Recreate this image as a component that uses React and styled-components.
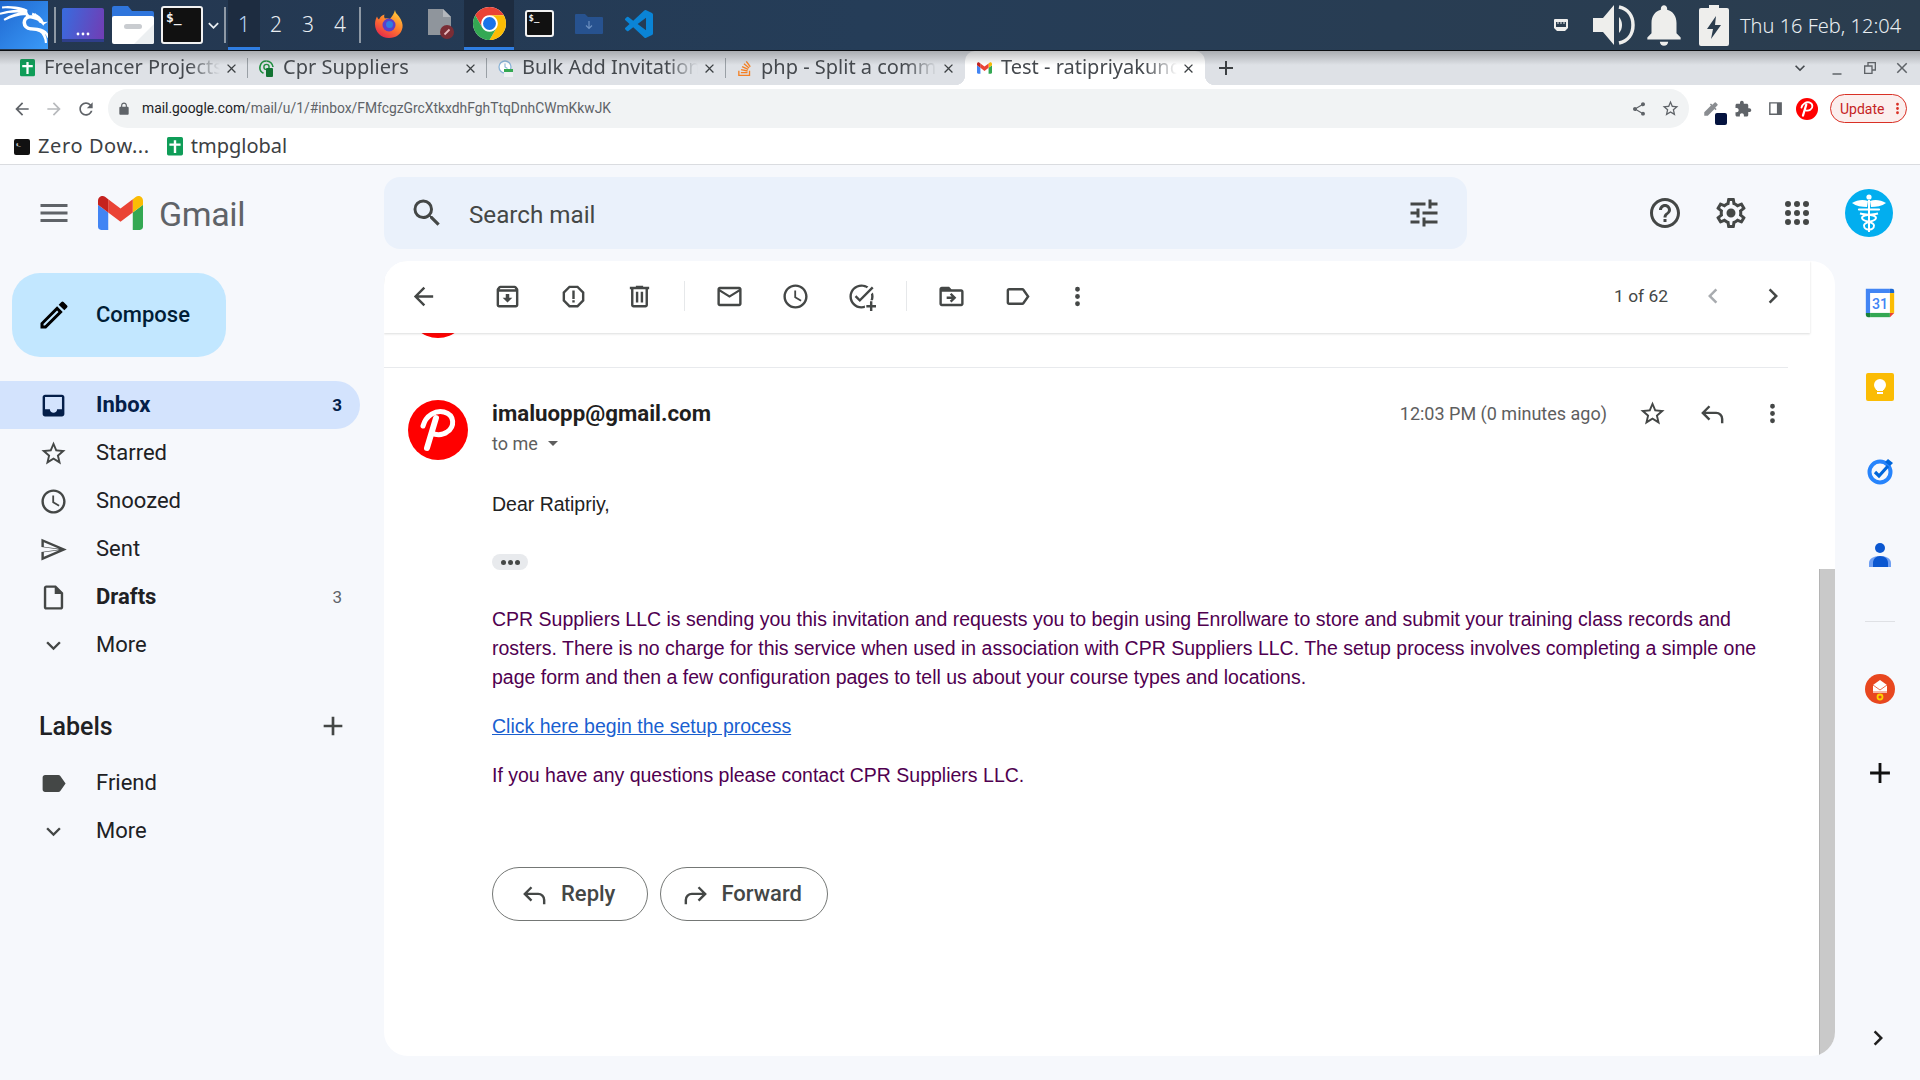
import React from 'react';
import styled, { createGlobalStyle } from 'styled-components';
import { SiKalilinux, SiStackoverflow } from 'react-icons/si';

const P = {
  menu: 'M3 18h18v-2H3v2zm0-5h18v-2H3v2zm0-7v2h18V6H3z',
  search: 'M15.5 14h-.79l-.28-.27A6.471 6.471 0 0 0 16 9.5 6.5 6.5 0 1 0 9.5 16c1.61 0 3.09-.59 4.23-1.57l.27.28v.79l5 4.99L20.49 19l-4.99-5zm-6 0C7.01 14 5 11.99 5 9.5S7.01 5 9.5 5 14 7.01 14 9.5 11.99 14 9.5 14z',
  tune: 'M3 17v2h6v-2H3zM3 5v2h10V5H3zm10 16v-2h8v-2h-8v-2h-2v6h2zM7 9v2H3v2h4v2h2V9H7zm14 4v-2H11v2h10zm-6-4h2V7h4V5h-4V3h-2v6z',
  help: 'M11 18h2v-2h-2v2zm1-16C6.48 2 2 6.48 2 12s4.48 10 10 10 10-4.48 10-10S17.52 2 12 2zm0 18c-4.41 0-8-3.59-8-8s3.59-8 8-8 8 3.59 8 8-3.59 8-8 8zm0-14c-2.21 0-4 1.79-4 4h2c0-1.1.9-2 2-2s2 .9 2 2c0 2-3 1.75-3 5h2c0-2.25 3-2.5 3-5 0-2.21-1.79-4-4-4z',
  gear: 'M19.43 12.98c.04-.32.07-.64.07-.98 0-.34-.03-.66-.07-.98l2.11-1.65c.19-.15.24-.42.12-.64l-2-3.46c-.09-.16-.26-.25-.44-.25-.06 0-.12.01-.17.03l-2.49 1c-.52-.4-1.08-.73-1.69-.98l-.38-2.65C14.46 2.18 14.25 2 14 2h-4c-.25 0-.46.18-.49.42l-.38 2.65c-.61.25-1.17.59-1.69.98l-2.49-1c-.06-.02-.12-.03-.18-.03-.17 0-.34.09-.43.25l-2 3.46c-.13.22-.07.49.12.64l2.11 1.65c-.04.32-.07.65-.07.98 0 .33.03.66.07.98l-2.11 1.65c-.19.15-.24.42-.12.64l2 3.46c.09.16.26.25.44.25.06 0 .12-.01.17-.03l2.49-1c.52.4 1.08.73 1.69.98l.38 2.65c.03.24.24.42.49.42h4c.25 0 .46-.18.49-.42l.38-2.65c.61-.25 1.17-.59 1.69-.98l2.49 1c.06.02.12.03.18.03.17 0 .34-.09.43-.25l2-3.46c.12-.22.07-.49-.12-.64l-2.11-1.65zm-1.98-1.71c.04.31.05.52.05.73 0 .21-.02.43-.05.73l-.14 1.13.89.7 1.08.84-.7 1.21-1.27-.51-1.04-.42-.9.68c-.43.32-.84.56-1.25.73l-1.06.43-.16 1.13-.2 1.35h-1.4l-.19-1.35-.16-1.13-1.06-.43c-.43-.18-.83-.41-1.23-.71l-.91-.7-1.06.43-1.27.51-.7-1.21 1.08-.84.89-.7-.14-1.13c-.03-.31-.05-.54-.05-.74s.02-.43.05-.73l.14-1.13-.89-.7-1.08-.84.7-1.21 1.27.51 1.04.42.9-.68c.43-.32.84-.56 1.25-.73l1.06-.43.16-1.13.2-1.35h1.39l.19 1.35.16 1.13 1.06.43c.43.18.83.41 1.23.71l.91.7 1.06-.43 1.27-.51.7 1.21-1.07.85-.89.7.14 1.13zM12 9a3 3 0 1 0 0 6 3 3 0 0 0 0-6z',
  apps: 'M4 6a2 2 0 1 0 4 0 2 2 0 0 0-4 0zm6 0a2 2 0 1 0 4 0 2 2 0 0 0-4 0zm6 0a2 2 0 1 0 4 0 2 2 0 0 0-4 0zM4 12a2 2 0 1 0 4 0 2 2 0 0 0-4 0zm6 0a2 2 0 1 0 4 0 2 2 0 0 0-4 0zm6 0a2 2 0 1 0 4 0 2 2 0 0 0-4 0zM4 18a2 2 0 1 0 4 0 2 2 0 0 0-4 0zm6 0a2 2 0 1 0 4 0 2 2 0 0 0-4 0zm6 0a2 2 0 1 0 4 0 2 2 0 0 0-4 0z',
  back: 'M20 11H7.83l5.59-5.59L12 4l-8 8 8 8 1.41-1.41L7.83 13H20v-2z',
  forward: 'M4 11h12.17l-5.59-5.59L12 4l8 8-8 8-1.41-1.41L16.17 13H4v-2z',
  archive: 'M20.54 5.23l-1.39-1.68C18.88 3.21 18.47 3 18 3H6c-.47 0-.88.21-1.16.55L3.46 5.23C3.17 5.57 3 6.02 3 6.5V19c0 1.1.9 2 2 2h14c1.1 0 2-.9 2-2V6.5c0-.48-.17-.93-.46-1.27zM6.24 5h11.52l.83 1H5.42l.82-1zM5 19V8h14v11H5zm8.45-9h-2.9v3H8l4 4 4-4h-2.55z',
  report: 'M15.73 3H8.27L3 8.27v7.46L8.27 21h7.46L21 15.73V8.27L15.73 3zM19 14.9L14.9 19H9.1L5 14.9V9.1L9.1 5h5.8L19 9.1v5.8zM11 7h2v7h-2zm0 8h2v2h-2z',
  trash: 'M15 4V3H9v1H4v2h1v13c0 1.1.9 2 2 2h10c1.1 0 2-.9 2-2V6h1V4h-5zm2 15H7V6h10v13zM9 8h2v9H9zm4 0h2v9h-2z',
  mail: 'M20 4H4c-1.1 0-1.99.9-1.99 2L2 18c0 1.1.9 2 2 2h16c1.1 0 2-.9 2-2V6c0-1.1-.9-2-2-2zm0 14H4V8l8 5 8-5v10zm-8-7L4 6h16l-8 5z',
  clock: 'M11.99 2C6.47 2 2 6.48 2 12s4.47 10 9.99 10C17.52 22 22 17.52 22 12S17.52 2 11.99 2zM12 20c-4.42 0-8-3.58-8-8s3.58-8 8-8 8 3.58 8 8-3.58 8-8 8zm.5-13H11v6l5.25 3.15.75-1.23-4.5-2.67z',
  addTask: 'M22 5.18L10.59 16.6l-4.24-4.24 1.41-1.41 2.83 2.83 10-10L22 5.18zm-2.21 5.04c.13.57.21 1.17.21 1.78 0 1.1-.22 2.1-.6 3h2.1c.3-.95.5-1.95.5-3 0-1.19-.22-2.33-.6-3.39l-1.61 1.61zM12 20c-4.42 0-8-3.58-8-8s3.58-8 8-8c1.58 0 3.04.46 4.28 1.25l1.44-1.44A9.9 9.9 0 0 0 12 2C6.48 2 2 6.48 2 12s4.48 10 10 10c1 0 1.9-.15 2.8-.4v-2.1c-.85.3-1.8.5-2.8.5zM19 16v3h-3v2h3v3h2v-3h3v-2h-3v-3z',
  move: 'M20 6h-8l-2-2H4c-1.1 0-2 .9-2 2v12c0 1.1.9 2 2 2h16c1.1 0 2-.9 2-2V8c0-1.1-.9-2-2-2zm0 12H4V8h16v10zm-8.01-9l-1.41 1.41L12.16 12H8v2h4.16l-1.59 1.59L11.99 17 16 13.01 11.99 9z',
  label: 'M17.63 5.84C17.27 5.33 16.67 5 16 5L5 5.01C3.9 5.01 3 5.9 3 7v10c0 1.1.9 1.99 2 1.99L16 19c.67 0 1.27-.33 1.63-.84L22 12l-4.37-6.16zM16 17H5V7h11l3.55 5L16 17z',
  labelFill: 'M17.63 5.84C17.27 5.33 16.67 5 16 5L5 5.01C3.9 5.01 3 5.9 3 7v10c0 1.1.9 1.99 2 1.99L16 19c.67 0 1.27-.33 1.63-.84L22 12l-4.37-6.16z',
  more: 'M12 8a2 2 0 1 0 0-4 2 2 0 0 0 0 4zm0 2a2 2 0 1 0 0 4 2 2 0 0 0 0-4zm0 6a2 2 0 1 0 0 4 2 2 0 0 0 0-4z',
  left: 'M15.41 7.41L14 6l-6 6 6 6 1.41-1.41L10.83 12z',
  right: 'M10 6L8.59 7.41 13.17 12l-4.58 4.59L10 18l6-6z',
  star: 'M22 9.24l-7.19-.62L12 2 9.19 8.63 2 9.24l5.46 4.73L5.82 21 12 17.27 18.18 21l-1.63-7.03L22 9.24zM12 15.4l-3.76 2.27 1-4.28-3.32-2.88 4.38-.38L12 6.1l1.71 4.04 4.38.38-3.32 2.88 1 4.28L12 15.4z',
  inbox: 'M19 3H5c-1.1 0-2 .9-2 2v14c0 1.1.9 2 2 2h14c1.1 0 2-.9 2-2V5c0-1.1-.9-2-2-2zm0 12h-4c0 1.66-1.35 3-3 3s-3-1.34-3-3H4.99V5H19v10z',
  send: 'M2.01 3L2 10l15 2-15 2 .01 7L23 12 2.01 3zM4.01 6.03l12.6 5.4-12.61-1.68.01-3.72zM4 14.25l12.6-1.68L4 17.97v-3.72z',
  draft: 'M14 2H6c-1.1 0-1.99.9-1.99 2L4 20c0 1.1.89 2 1.99 2H18c1.1 0 2-.9 2-2V8l-6-6zm4 18H6V4h7v5h5v11z',
  expand: 'M16.59 8.59L12 13.17 7.41 8.59 6 10l6 6 6-6z',
  edit: 'M3 17.25V21h3.75L17.81 9.94l-3.75-3.75L3 17.25zM5.92 19H5v-.92l9.06-9.06.92.92L5.92 19zM20.71 7.04a.996.996 0 0 0 0-1.41l-2.34-2.34a.996.996 0 0 0-1.41 0l-1.83 1.83 3.75 3.75 1.83-1.83z',
  add: 'M19 13h-6v6h-2v-6H5v-2h6V5h2v6h6v2z',
  dropdown: 'M7 10l5 5 5-5z',
  close: 'M19 6.41L17.59 5 12 10.59 6.41 5 5 6.41 10.59 12 5 17.59 6.41 19 12 13.41 17.59 19 19 17.59 13.41 12z',
  refresh: 'M17.65 6.35C16.2 4.9 14.21 4 12 4c-4.42 0-7.99 3.58-7.99 8s3.57 8 7.99 8c3.73 0 6.84-2.55 7.73-6h-2.08c-.82 2.33-3.04 4-5.65 4-3.31 0-6-2.69-6-6s2.69-6 6-6c1.66 0 3.14.69 4.22 1.78L13 11h7V4l-2.35 2.35z',
  lock: 'M18 8h-1V6c0-2.76-2.24-5-5-5S7 3.24 7 6v2H6c-1.1 0-2 .9-2 2v10c0 1.1.9 2 2 2h12c1.1 0 2-.9 2-2V10c0-1.1-.9-2-2-2zM9 6c0-1.66 1.34-3 3-3s3 1.34 3 3v2H9V6z',
  share: 'M18 16.08c-.76 0-1.44.3-1.96.77L8.91 12.7c.05-.23.09-.46.09-.7s-.04-.47-.09-.7l7.05-4.11c.54.5 1.25.81 2.04.81 1.66 0 3-1.34 3-3s-1.34-3-3-3-3 1.34-3 3c0 .24.04.47.09.7L8.04 9.81C7.5 9.31 6.79 9 6 9c-1.66 0-3 1.34-3 3s1.34 3 3 3c.79 0 1.5-.31 2.04-.81l7.12 4.16c-.05.21-.08.43-.08.65 0 1.61 1.31 2.92 2.92 2.92 1.61 0 2.92-1.31 2.92-2.92s-1.31-2.92-2.92-2.92z',
  puzzle: 'M20.5 11H19V7c0-1.1-.9-2-2-2h-4V3.5C13 2.12 11.88 1 10.5 1S8 2.12 8 3.5V5H4c-1.1 0-1.99.9-1.99 2v3.8H3.5c1.49 0 2.7 1.21 2.7 2.7s-1.21 2.7-2.7 2.7H2V20c0 1.1.9 2 2 2h3.8v-1.5c0-1.49 1.21-2.7 2.7-2.7 1.49 0 2.7 1.21 2.7 2.7V22H17c1.1 0 2-.9 2-2v-4h1.5c1.38 0 2.5-1.12 2.5-2.5S21.88 11 20.5 11z',
  dropper: 'M20.71 5.63l-2.34-2.34a.996.996 0 0 0-1.41 0l-3.12 3.12-1.93-1.91-1.41 1.41 1.42 1.42L3 16.25V21h4.75l8.92-8.92 1.42 1.42 1.41-1.41-1.92-1.92 3.12-3.12c.4-.4.4-1.03.01-1.42z',
  sidePanel: 'M3 3h18v18H3V3zm2 2v14h9V5H5z',
  bell: 'M12 22c1.1 0 2-.9 2-2h-4c0 1.1.9 2 2 2zm6-6v-5c0-3.07-1.63-5.64-4.5-6.32V4c0-.83-.67-1.5-1.5-1.5s-1.5.67-1.5 1.5v.68C7.64 5.36 6 7.92 6 11v5l-2 2v1h16v-1l-2-2z',
};

const Icon = styled.svg.attrs({ viewBox: '0 0 24 24' })`
  width: ${(p) => p.$size || 29}px;
  height: ${(p) => p.$size || 29}px;
  flex: none;
  fill: ${(p) => p.$color || '#444746'};
  fill-rule: evenodd;
`;

const Glyph = ({ d, size, color }) => (
  <Icon $size={size} $color={color}>
    <path d={d} />
  </Icon>
);

const ArrowIcon = styled.svg.attrs({ viewBox: '0 0 24 24' })`
  width: 29px;
  height: 29px;
  flex: none;
  fill: none;
  stroke: ${(p) => p.$color || '#444746'};
  stroke-width: 2;
  transform: ${(p) => (p.$flip ? 'scaleX(-1)' : 'none')};
`;

const ReplyArrow = ({ flip }) => (
  <ArrowIcon $flip={flip}>
    <path d="M9.5 6L4 11.5 9.5 17M4 11.5h11a5 5 0 0 1 5 5V20" />
  </ArrowIcon>
);

const GlobalStyle = createGlobalStyle`
  html, body {
    margin: 0;
    height: 1080px;
    overflow: hidden;
    background: #f6f8fc;
    font-family: Roboto, "Liberation Sans", sans-serif;
  }
  * { box-sizing: border-box; }
`;

const Desktop = styled.div`
  width: 1920px;
  height: 1080px;
  display: flex;
  flex-direction: column;
  overflow: hidden;
`;

/* ---------- panel of the desktop ---------- */
const Taskbar = styled.div`
  height: 51px;
  flex: none;
  display: flex;
  align-items: center;
  background: linear-gradient(90deg, #243750 0%, #253d58 45%, #2b3d4e 100%);
  border-bottom: 1px solid #0c0f12;
  font-family: "Noto Sans", sans-serif;
  color: #e9eef2;
`;

const KaliTile = styled.div`
  width: 48px;
  height: 48px;
  margin-bottom: 1px;
  display: flex;
  align-items: center;
  justify-content: center;
  background: linear-gradient(135deg, #2068d0, #3a9af8);
`;

const PanelSep = styled.div`
  width: 2px;
  height: 36px;
  margin-left: ${(p) => p.$left || 0}px;
  background: #8e99a5;
  flex: none;
`;

const Launcher = styled.div`
  display: flex;
  margin-left: ${(p) => p.$left || 0}px;
  flex: none;
`;

const Workspace = styled.div`
  width: 32px;
  height: 50px;
  display: flex;
  align-items: center;
  justify-content: center;
  font-size: 21px;
  font-weight: 300;
  background: ${(p) => (p.$active ? '#1d2c40' : 'transparent')};
  border-bottom: 3px solid ${(p) => (p.$active ? '#2f7de1' : 'transparent')};
  color: ${(p) => (p.$active ? '#bcd6f4' : '#e9eef2')};
  margin-left: ${(p) => (p.$active ? '2px' : '0')};
`;

const AppButton = styled.div`
  width: 50px;
  height: 50px;
  display: flex;
  align-items: center;
  justify-content: center;
  flex: none;
  background: ${(p) => (p.$active ? '#1d2c40' : 'transparent')};
  border-bottom: 3px solid ${(p) => (p.$active ? '#2f7de1' : 'transparent')};
`;

const Tray = styled.div`
  margin-left: auto;
  display: flex;
  align-items: center;
  height: 50px;
`;

const Clock = styled.div`
  margin-left: 11px;
  font-size: 20px;
  font-weight: 300;
  width: 180px;
  white-space: nowrap;
`;

const SvgBox = styled.svg`
  display: block;
  flex: none;
  margin-left: ${(p) => p.$left || 0}px;
`;

/* ---------- browser chrome ---------- */
const TabStrip = styled.div`
  height: 34px;
  flex: none;
  position: relative;
  display: flex;
  align-items: center;
  padding-left: 9px;
  background: #dee1e6;
  font-family: "Noto Sans", sans-serif;
  color: #45494e;
  &::after {
    content: '';
    position: absolute;
    left: 0;
    right: 0;
    top: 0;
    height: 14px;
    background: linear-gradient(rgba(60, 64, 67, 0.32), rgba(60, 64, 67, 0));
    pointer-events: none;
  }
`;

const Tab = styled.div`
  width: 239px;
  height: 34px;
  flex: none;
  display: flex;
  align-items: center;
  padding-left: 11px;
  position: relative;
  ${(p) => p.$active && `
    background: #fff;
    border-radius: 10px 10px 0 0;
    width: 240px;
    padding-left: 12px;
    &::before, &::after {
      content: '';
      position: absolute;
      bottom: 0;
      width: 10px;
      height: 10px;
    }
    &::before {
      left: -10px;
      background: radial-gradient(circle at 0 0, transparent 10px, #fff 10.5px);
    }
    &::after {
      right: -10px;
      background: radial-gradient(circle at 100% 0, transparent 10px, #fff 10.5px);
    }
  `}
`;

const TabTitle = styled.div`
  margin-left: 9px;
  width: 176px;
  padding-bottom: 3px;
  font-size: 20px;
  white-space: nowrap;
  overflow: hidden;
  -webkit-mask-image: linear-gradient(90deg, #000 82%, transparent 100%);
  mask-image: linear-gradient(90deg, #000 82%, transparent 100%);
`;

const TabClose = styled.div`
  width: 22px;
  display: flex;
  justify-content: center;
`;

const TabDivider = styled.div`
  width: 1px;
  height: 20px;
  margin-left: auto;
  background: #9aa0a6;
`;

const NewTab = styled.div`
  margin-left: 9px;
  display: flex;
`;

const WindowControls = styled.div`
  margin-left: auto;
  display: flex;
  align-items: center;
  gap: 14px;
  padding-right: 9px;
`;

const WinBtn = styled.div`
  width: ${(p) => p.$w || 18}px;
  margin-right: ${(p) => p.$right || 0}px;
  display: flex;
  justify-content: center;
`;

const UrlRow = styled.div`
  height: 44px;
  flex: none;
  background: #fff;
  display: flex;
  align-items: center;
  padding: 4px 0 1px 6px;
`;

const NavBtn = styled.div`
  width: 32px;
  display: flex;
  justify-content: center;
  flex: none;
`;

const Omnibox = styled.div`
  width: 1581px;
  height: 39px;
  margin-left: 6px;
  border-radius: 20px;
  background: #f1f3f4;
  display: flex;
  align-items: center;
  padding-left: 9px;
  flex: none;
`;

const UrlText = styled.div`
  margin-left: 11px;
  padding-bottom: 1px;
  font-size: 13.85px;
  color: #5f6368;
  white-space: nowrap;
  b { font-weight: 400; color: #202124; }
`;

const OmniActions = styled.div`
  margin-left: auto;
  display: flex;
  align-items: center;
  gap: 14px;
  padding-right: 9px;
`;

const Extensions = styled.div`
  display: flex;
  align-items: center;
  margin-left: 10px;
  gap: 8px;
`;

const ExtSlot = styled.div`
  width: 24px;
  height: 24px;
  position: relative;
  display: flex;
  align-items: center;
  justify-content: center;
`;

const DropperBadge = styled.span`
  position: absolute;
  right: -4px;
  bottom: -4px;
  width: 12px;
  height: 12px;
  border-radius: 2px;
  background: #04133f;
`;

const UpdatePill = styled.div`
  width: 77px;
  height: 29px;
  margin-left: 3px;
  border: 1px solid #d93025;
  border-radius: 15px;
  background: #fbeeed;
  color: #c5221f;
  font-size: 14px;
  display: flex;
  align-items: center;
  padding-left: 9px;
  svg { margin-left: auto; }
`;

const BookmarkBar = styled.div`
  height: 36px;
  flex: none;
  background: #fff;
  border-bottom: 1px solid #dadce0;
  display: flex;
  align-items: center;
  padding-left: 14px;
  font-family: "Noto Sans", sans-serif;
  font-size: 20px;
  color: #3c4043;
`;

const Bookmark = styled.div`
  display: flex;
  align-items: center;
  gap: 8px;
  margin-right: 17px;
  white-space: nowrap;
`;

const BookmarkName = styled.span`
  padding-bottom: 3px;
  letter-spacing: ${(p) => (p.$wide ? '0.6px' : '0')};
`;

/* ---------- gmail ---------- */
const Mail = styled.div`
  flex: 1;
  min-height: 0;
  display: flex;
  flex-direction: column;
  background: #f6f8fc;
`;

const TopBar = styled.div`
  height: 96px;
  flex: none;
  display: flex;
`;

const Brand = styled.div`
  width: 384px;
  flex: none;
  display: flex;
  align-items: center;
  padding-left: 36px;
`;

const BrandName = styled.div`
  margin-left: 16px;
  padding-top: 2px;
  font-size: 34px;
  color: #5f6368;
  letter-spacing: -0.4px;
`;

const SearchBox = styled.div`
  width: 1083px;
  height: 72px;
  margin-top: 12px;
  border-radius: 16px;
  background: #eaf1fb;
  display: flex;
  align-items: center;
  padding: 0 25px;
  font-size: 24.2px;
  color: #444746;
`;

const SearchHint = styled.div`
  margin-left: 24px;
  padding-top: 3px;
  flex: 1;
`;

const TopActions = styled.div`
  margin-left: auto;
  display: flex;
  align-items: center;
  padding-right: 27px;
`;

const TopAction = styled.div`
  width: 66px;
  display: flex;
  justify-content: center;
`;

const UserAvatar = styled.div`
  width: 48px;
  height: 48px;
  margin-left: 15px;
  border-radius: 50%;
  background: #02aeef;
  display: flex;
  align-items: center;
  justify-content: center;
`;

const Body = styled.div`
  flex: 1;
  min-height: 0;
  display: flex;
`;

const Sidebar = styled.div`
  width: 384px;
  flex: none;
`;

const Compose = styled.div`
  width: 214px;
  height: 84px;
  margin: 12px 0 24px 12px;
  border-radius: 28px;
  background: #c2e7ff;
  display: flex;
  align-items: center;
  gap: 24px;
  padding-left: 24px;
  font-size: 22px;
  font-weight: 500;
  color: #001d35;
`;

const NavRow = styled.div`
  width: 360px;
  height: 48px;
  display: flex;
  align-items: center;
  gap: 28px;
  padding: 0 18px 0 39px;
  border-radius: 0 24px 24px 0;
  font-size: 22px;
  font-weight: ${(p) => (p.$bold ? 700 : 400)};
  color: ${(p) => (p.$active ? '#041e49' : '#202124')};
  background: ${(p) => (p.$active ? '#d3e3fd' : 'transparent')};
`;

const RowText = styled.span`
  padding-bottom: 2px;
`;

const NavCount = styled.span`
  margin-left: auto;
  font-size: 17px;
  font-weight: ${(p) => (p.$strong ? 700 : 400)};
  color: ${(p) => (p.$strong ? '#041e49' : '#5f6368')};
`;

const LabelsHead = styled.div`
  height: 48px;
  margin-top: 33px;
  margin-bottom: 9px;
  width: 360px;
  display: flex;
  align-items: center;
  justify-content: space-between;
  padding: 0 11px 0 39px;
  font-size: 25px;
  font-weight: 500;
  color: #202124;
`;

const Panel = styled.div`
  width: 1451px;
  height: 795px;
  flex: none;
  border-radius: 24px;
  background: #fff;
  overflow: hidden;
  display: flex;
  flex-direction: column;
`;

const MailToolbar = styled.div`
  height: 72px;
  width: 1426px;
  flex: none;
  display: flex;
  align-items: center;
  padding: 0 7px 2px 6px;
  box-shadow: 0 1px 2px rgba(60, 64, 67, 0.18);
  background: #fff;
  position: relative;
  z-index: 1;
`;

const ToolBtn = styled.div`
  width: ${(p) => p.$w || 66}px;
  height: 48px;
  flex: none;
  margin-left: ${(p) => p.$left || 0}px;
  display: flex;
  align-items: center;
  justify-content: center;
`;

const ToolSep = styled.div`
  width: 1px;
  height: 30px;
  flex: none;
  margin: 0 11px 0 12px;
  background: #e6e8ea;
`;

const PageCount = styled.div`
  margin-left: auto;
  margin-right: 15px;
  font-size: 17.4px;
  color: #444746;
`;

const MessageArea = styled.div`
  flex: 1;
  min-height: 0;
  display: flex;
`;

const MessageScroll = styled.div`
  flex: 1;
  min-width: 0;
`;

const PeekAvatar = styled.div`
  width: 60px;
  height: 5px;
  margin-left: 24px;
  overflow: hidden;
  &::before {
    content: '';
    display: block;
    width: 60px;
    height: 60px;
    margin-top: -55px;
    border-radius: 50%;
    background: #f00;
  }
`;

const MessageRule = styled.div`
  width: 1404px;
  height: 1px;
  margin-top: 29px;
  background: #e8eaed;
`;

const MessageHead = styled.div`
  display: flex;
  margin-top: 32px;
  padding: 0 17px 0 24px;
  height: 60px;
`;

const SenderAvatar = styled.div`
  width: 60px;
  height: 60px;
  flex: none;
  margin-right: 24px;
`;

const SenderInfo = styled.div`
  flex: 1;
`;

const SenderName = styled.div`
  font-size: 22.3px;
  line-height: 26px;
  font-weight: 700;
  color: #1f1f1f;
`;

const Recipient = styled.div`
  margin-top: 5px;
  height: 24px;
  display: flex;
  align-items: center;
  font-size: 18px;
  color: #5e5e5e;
  svg { margin-left: 3px; }
`;

const MessageMeta = styled.div`
  display: flex;
  align-items: center;
  height: 27px;
  font-size: 18px;
  color: #5e5e5e;
`;

const MetaTime = styled.div`
  margin-right: 15px;
`;

const MetaBtn = styled.div`
  width: 60px;
  display: flex;
  justify-content: center;
`;

const MessageBody = styled.div`
  padding-left: 108px;
  width: 1392px;
  margin-top: 30px;
  font-family: "Liberation Sans", Arial, sans-serif;
  font-size: 19.5px;
  line-height: 29px;
  color: #222;
`;

const TrimPill = styled.div`
  width: 36px;
  height: 16px;
  margin-top: 35px;
  border-radius: 8px;
  background: #e8eaed;
  display: flex;
  align-items: center;
  justify-content: center;
  gap: 2px;
  span {
    width: 5px;
    height: 5px;
    border-radius: 50%;
    background: #444746;
  }
`;

const Para = styled.p`
  margin: ${(p) => p.$top || 20}px 0 0;
  color: #500050;
`;

const MailLink = styled.a`
  color: #1a5fd0;
  text-decoration: underline;
`;

const ActionRow = styled.div`
  display: flex;
  gap: 12px;
  margin-top: 77px;
  font-family: Roboto, sans-serif;
`;

const PillButton = styled.div`
  height: 54px;
  border: 1px solid #747775;
  border-radius: 27px;
  display: flex;
  align-items: center;
  gap: ${(p) => (p.$forward ? 11 : 12)}px;
  padding: ${(p) => (p.$forward ? '0 25px 0 20px' : '0 32px 0 27px')};
  font-size: 22px;
  font-weight: 500;
  color: #444746;
`;

const ScrollTrack = styled.div`
  width: 16px;
  flex: none;
  display: flex;
  align-items: flex-end;
`;

const ScrollThumb = styled.div`
  width: 100%;
  height: 487px;
  background: #c9c9c9;
  border-left: 1px solid #b4b4b4;
`;

const Rail = styled.div`
  flex: 1;
  display: flex;
  flex-direction: column;
  align-items: center;
  padding: 0 0 27px 5px;
`;

const RailCell = styled.div`
  height: 84px;
  width: 100%;
  flex: none;
  display: flex;
  align-items: center;
  justify-content: center;
`;

const RailRule = styled.div`
  width: 30px;
  height: 1px;
  flex: none;
  margin: 24px 0 25px;
  background: #dfe1e5;
`;

const RailToggle = styled.div`
  margin-top: auto;
  margin-right: 5px;
  display: flex;
`;

/* ---------- drawn logos ---------- */
const SheetsIcon = ({ size = 15 }) => (
  <SvgBox width={size} height={size * 1.15} viewBox="0 0 20 23">
    <rect width="20" height="23" rx="2" fill="#0f9d58" />
    <path d="M3 8h5.500V4h3v4H17v3h-5.500v9h-3v-9H3z" fill="#fff" />
  </SvgBox>
);

const CprIcon = () => (
  <SvgBox width="15" height="17" viewBox="0 0 15 17">
    <path d="M7.500 1a6.500 6.500 0 0 0-3 12.300" fill="none" stroke="#1e8e3e" strokeWidth="1.600" />
    <path d="M7.500 1a6.500 6.500 0 0 1 6.500 6" fill="none" stroke="#1e8e3e" strokeWidth="1.600" />
    <circle cx="7.500" cy="7" r="2.600" fill="none" stroke="#1e8e3e" strokeWidth="1.400" />
    <rect x="7" y="8" width="7" height="9" rx="1" fill="#137333" />
  </SvgBox>
);

const BulkIcon = () => (
  <SvgBox width="15" height="17" viewBox="0 0 15 17">
    <circle cx="7" cy="7" r="6" fill="#fff" stroke="#8ab4d8" strokeWidth="1.300" />
    <path d="M7 3.500V7l2.500 1.500" fill="none" stroke="#8ab4d8" strokeWidth="1.100" />
    <rect x="6" y="9" width="9" height="3" fill="#34a853" />
    <rect x="6" y="12" width="9" height="5" fill="#eceff1" />
  </SvgBox>
);

const GmailMark = ({ w = 45, h = 34 }) => (
  <SvgBox width={w} height={h} viewBox="52 42 88 66">
    <path fill="#4285f4" d="M58 108h14V74L52 59v43c0 3.32 2.69 6 6 6" />
    <path fill="#34a853" d="M120 108h14c3.32 0 6-2.69 6-6V59l-20 15" />
    <path fill="#fbbc04" d="M120 48v26l20-15v-8c0-7.42-8.47-11.65-14.4-7.2" />
    <path fill="#ea4335" d="M72 74V48l24 18 24-18v26L96 92" />
    <path fill="#c5221f" d="M52 51v8l20 15V48l-5.6-4.2c-5.94-4.45-14.4-.22-14.4 7.2" />
  </SvgBox>
);

const PinLogo = ({ size }) => (
  <SvgBox width={size} height={size} viewBox="0 0 60 60">
    <circle cx="30" cy="30" r="30" fill="#f00" />
    <path d="M19 48C22 38 25 28 28 18" fill="none" stroke="#fff" strokeWidth="6" strokeLinecap="round" />
    <path d="M15 26C18 15 28 10 36 12C47 15 47 27 39 32C35 35 30 35 26 34" fill="none" stroke="#fff" strokeWidth="5" strokeLinecap="round" />
  </SvgBox>
);

const CaduceusLogo = () => (
  <SvgBox width="48" height="48" viewBox="0 0 48 48">
    <circle cx="24" cy="8" r="2.600" fill="#fff" />
    <path d="M23 12C18 10 12 11 7 14C11 17 17 18 22 18z" fill="#fff" />
    <path d="M25 12C30 10 36 11 41 14C37 17 31 18 26 18z" fill="#fff" />
    <path d="M24 11V43" stroke="#fff" strokeWidth="2" />
    <path d="M14 20.500H34" stroke="#fff" strokeWidth="2.200" strokeLinecap="round" />
    <path d="M15 24.500C20 26 31 25 31 29C31 33 19 32 19 36.500C19 40 22 40.500 23 40.500" fill="none" stroke="#fff" strokeWidth="1.900" />
    <path d="M33 24.500C28 26 17 25 17 29C17 33 29 32 29 36.500C29 40 26 40.500 25 40.500" fill="none" stroke="#fff" strokeWidth="1.900" />
  </SvgBox>
);

const ChromeLogo = () => (
  <SvgBox width="33" height="33" viewBox="2 2 44 44">
    <circle cx="24" cy="24" r="22" fill="#fff" />
    <path fill="#ea4335" d="M4.95 13A22 22 0 0 1 43.05 13H24A11 11 0 0 0 14.47 29.5Z" />
    <path fill="#fbbc04" d="M43.05 13A22 22 0 0 1 24 46L33.53 29.5A11 11 0 0 0 24 13Z" />
    <path fill="#34a853" d="M24 46A22 22 0 0 1 4.95 13L14.47 29.5A11 11 0 0 0 33.53 29.5Z" />
    <circle cx="24" cy="24" r="8.6" fill="#1a73e8" />
  </SvgBox>
);

const FirefoxLogo = () => (
  <SvgBox width="28" height="28" viewBox="0 0 28 28">
    <defs>
      <linearGradient id="ffx" x1="0.8" y1="0" x2="0.2" y2="1">
        <stop offset="0" stopColor="#ffd23c" />
        <stop offset="0.5" stopColor="#ff7a2c" />
        <stop offset="1" stopColor="#e5224e" />
      </linearGradient>
    </defs>
    <path fill="url(#ffx)" d="M20 0c.4 3 2 4 4 6.500 3 4 4 8 3.500 11C26.500 24 21 28 14 28 6 28 0 22 0 14c0-3 1-6 2-7.500C2.500 8 3.300 9 4 9.500 5 7 7 5 9.500 4.500 9 6 9 7.500 10 8.500c2-.5 3.500 0 5 .5 2-3 4-5 5-9z" />
    <circle cx="14" cy="15" r="6.500" fill="#5b3fc9" />
    <circle cx="14.500" cy="14.500" r="3.500" fill="#2f7de1" />
  </SvgBox>
);

const DocLogo = () => (
  <SvgBox width="28" height="30" viewBox="0 0 28 30" $left={4}>
    <path fill="#8f959c" d="M1 0h15l8 8v18H1z" />
    <path fill="#b3b7bc" d="M16 0l8 8h-8z" />
    <circle cx="20" cy="23" r="7" fill="#7a2d35" />
    <path d="M17.500 25.500l5-5" stroke="#e8b9bd" strokeWidth="1.800" />
  </SvgBox>
);

const TerminalLogo = ({ w, h, size, border = 2 }) => (
  <SvgBox width={w} height={h} viewBox={`0 0 ${w} ${h}`}>
    <rect x={border / 2} y={border / 2} width={w - border} height={h - border} rx="2" fill="#111" stroke="#f2f2f2" strokeWidth={border} />
    <text x={w * 0.12} y={h * 0.42} fontFamily="DejaVu Sans Mono, monospace" fontSize={size} fontWeight="700" fill="#f2f2f2">$_</text>
  </SvgBox>
);

const WindowTile = () => (
  <SvgBox width="42" height="35" viewBox="0 0 42 35">
    <defs>
      <linearGradient id="wt" x1="0" y1="0.4" x2="1" y2="0.6">
        <stop offset="0" stopColor="#3b69dc" />
        <stop offset="1" stopColor="#6f3fb6" />
      </linearGradient>
    </defs>
    <rect width="42" height="34" rx="2" fill="url(#wt)" />
    <rect y="31" width="42" height="3" fill="#2e3e8a" />
    <circle cx="16" cy="26" r="1.400" fill="#fff" />
    <circle cx="21" cy="26" r="1.400" fill="#fff" />
    <circle cx="26" cy="26" r="1.400" fill="#fff" />
  </SvgBox>
);

const FolderLogo = () => (
  <SvgBox width="42" height="38" viewBox="0 0 42 38" $left={8}>
    <path fill="#2f75dc" d="M2 0h14l4 5h20a2 2 0 0 1 2 2v8H0V2a2 2 0 0 1 2-2z" />
    <path fill="#fff" d="M2 10h38a2 2 0 0 1 2 2v24a2 2 0 0 1-2 2H2a2 2 0 0 1-2-2V12a2 2 0 0 1 2-2z" />
    <path fill="#eceff1" d="M42 18v18a2 2 0 0 1-2 2H22z" />
    <rect x="12" y="18" width="18" height="5" rx="2.500" fill="#c9ccd0" />
  </SvgBox>
);

const DownloadFolder = () => (
  <SvgBox width="28" height="20" viewBox="0 0 28 20">
    <path fill="#27528f" d="M1 0h9l3 3h14a1 1 0 0 1 1 1v15a1 1 0 0 1-1 1H1a1 1 0 0 1-1-1V1a1 1 0 0 1 1-1z" />
    <path d="M14 7v7M11 11.500l3 3 3-3" stroke="#6b8fc0" strokeWidth="1.200" fill="none" />
  </SvgBox>
);

const VsCodeLogo = () => (
  <SvgBox width="28" height="28" viewBox="0 0 24 24">
    <path fill="#0a84d6" d="M23.150 2.587L18.210.21a1.494 1.494 0 0 0-1.705.29l-9.460 8.630-4.120-3.128a.999.999 0 0 0-1.276.057L.327 7.261A1 1 0 0 0 .326 8.740L3.899 12 .326 15.260a1 1 0 0 0 .001 1.479L1.650 17.940a.999.999 0 0 0 1.276.057l4.120-3.128 9.460 8.630a1.492 1.492 0 0 0 1.704.29l4.942-2.377A1.500 1.500 0 0 0 24 20.060V3.939a1.500 1.500 0 0 0-.850-1.352zm-5.146 14.861L10.826 12l7.178-5.448v10.896z" />
  </SvgBox>
);

const NetworkIcon = () => (
  <SvgBox width="14" height="13" viewBox="0 0 14 13">
    <path fill="#eeeeec" d="M1 0h12a1 1 0 0 1 1 1v8l-3 3H3L0 9V1a1 1 0 0 1 1-1z" />
    <rect x="2" y="3" width="10" height="5" fill="#2b3d4e" />
    <path stroke="#eeeeec" strokeWidth="1" d="M4 3v2M7 3v2M10 3v2" />
  </SvgBox>
);

const VolumeIcon = () => (
  <SvgBox width="42" height="40" viewBox="0 0 42 40" $left={25}>
    <path fill="#eeeeec" d="M0 13h10L21 0v40L10 27H0z" />
    <path d="M26 2c9 2 14 9 14 18s-5 16-14 18" fill="none" stroke="#eeeeec" strokeWidth="3.500" />
    <path d="M26 12c2 2 3 5 3 8s-1 6-3 8z" fill="#eeeeec" />
  </SvgBox>
);

const BatteryIcon = () => (
  <SvgBox width="30" height="41" viewBox="0 0 30 41" $left={10}>
    <path fill="#eeeeec" d="M10 0h10v3h8a2 2 0 0 1 2 2v34a2 2 0 0 1-2 2H2a2 2 0 0 1-2-2V5a2 2 0 0 1 2-2h8z" />
    <path fill="#2b3d4e" d="M17 11L8 24h6l-2 10 10-14h-6z" />
  </SvgBox>
);

const CalendarIcon = () => (
  <SvgBox width="34" height="34" viewBox="0 0 24 24">
    <rect x="5" y="5" width="14" height="14" fill="#fff" />
    <path fill="#4285f4" d="M2 2h17v3H5v14H2z" />
    <path fill="#1967d2" d="M19 2h1.500A1.500 1.500 0 0 1 22 3.500V5h-3z" />
    <path fill="#fbbc04" d="M19 5h3v14h-3z" />
    <path fill="#34a853" d="M5 19h14v3H5z" />
    <path fill="#188038" d="M2 19h3v3H3.500A1.500 1.500 0 0 1 2 20.500z" />
    <path fill="#ea4335" d="M19 19h3l-3 3z" />
    <text x="12" y="16.300" textAnchor="middle" fontFamily="Roboto, sans-serif" fontSize="10" fontWeight="500" fill="#4285f4">31</text>
  </SvgBox>
);

const KeepIcon = () => (
  <SvgBox width="28" height="28" viewBox="0 0 28 28">
    <rect width="28" height="28" rx="2" fill="#fbbc04" />
    <circle cx="14" cy="12" r="6" fill="#fff" />
    <rect x="11" y="16" width="6" height="2" fill="#fff" />
    <rect x="11" y="19" width="6" height="2" fill="#fff" />
  </SvgBox>
);

const TasksIcon = () => (
  <SvgBox width="27" height="27" viewBox="0 0 27 27">
    <circle cx="13" cy="14" r="10.500" fill="none" stroke="#2684fc" strokeWidth="4" />
    <path d="M8 14l4 4 9-10" fill="none" stroke="#0066da" strokeWidth="3.200" />
    <path d="M21 1l5 4-3 3-5-4z" fill="#0066da" />
  </SvgBox>
);

const ContactsIcon = () => (
  <SvgBox width="22" height="24" viewBox="0 0 22 24">
    <circle cx="11" cy="5" r="5" fill="#0b57d0" />
    <path d="M0 24v-4c0-4 4-7 11-7s11 3 11 7v4z" fill="#6f9ff2" />
    <path d="M4 24v-4c0-4 3-7 7-7 5 0 8 3 8 7v4z" fill="#0b57d0" />
  </SvgBox>
);

const AddonIcon = () => (
  <SvgBox width="30" height="30" viewBox="0 0 30 30">
    <circle cx="15" cy="15" r="15" fill="#e8471f" />
    <path d="M8 11l7-5 7 5v8H8z" fill="#fff" />
    <path d="M8 11l7 5 7-5" fill="none" stroke="#e8471f" strokeWidth="0.800" />
    <rect x="8" y="17" width="14" height="2" fill="#f7b7a6" />
    <circle cx="15" cy="23" r="2.500" fill="none" stroke="#fdd000" strokeWidth="1.800" />
  </SvgBox>
);

const tabs = [
  { title: 'Freelancer Projects', icon: <SheetsIcon /> },
  { title: 'Cpr Suppliers', icon: <CprIcon /> },
  { title: 'Bulk Add Invitations', icon: <BulkIcon /> },
  { title: 'php - Split a comma', icon: <SiStackoverflow size={15} color="#f48024" />, plain: true },
];

const folders = [
  { name: 'Inbox', icon: P.inbox, bold: true, active: true, count: '3' },
  { name: 'Starred', icon: P.star },
  { name: 'Snoozed', icon: P.clock },
  { name: 'Sent', icon: P.send },
  { name: 'Drafts', icon: P.draft, bold: true, count: '3' },
  { name: 'More', icon: P.expand },
];

export default function App() {
  return (
    <Desktop>
      <GlobalStyle />
      <Taskbar>
        <KaliTile><SiKalilinux size={48} color="#fff" stroke="#fff" strokeWidth={1} /></KaliTile>
        <PanelSep $left={6} />
        <Launcher $left={6}><WindowTile /></Launcher>
        <FolderLogo />
        <Launcher $left={7}><TerminalLogo w={42} h={38} size={13} /></Launcher>
        <Launcher><Glyph d={P.expand} size={21} color="#e9eef2" /></Launcher>
        <PanelSep />
        {[1, 2, 3, 4].map((n) => (
          <Workspace key={n} $active={n === 1}>{n}</Workspace>
        ))}
        <PanelSep $left={3} />
        <Launcher $left={3}><AppButton><FirefoxLogo /></AppButton></Launcher>
        <AppButton><DocLogo /></AppButton>
        <AppButton $active><ChromeLogo /></AppButton>
        <AppButton><TerminalLogo w={29} h={27} size={9} /></AppButton>
        <AppButton><DownloadFolder /></AppButton>
        <AppButton><VsCodeLogo /></AppButton>
        <Tray>
          <NetworkIcon />
          <VolumeIcon />
          <Launcher $left={4}><Glyph d={P.bell} size={50} color="#eeeeec" /></Launcher>
          <BatteryIcon />
          <Clock>Thu 16 Feb, 12:04</Clock>
        </Tray>
      </Taskbar>

      <TabStrip>
        {tabs.map((t) => (
          <Tab key={t.title}>
            {t.icon}
            <TabTitle>{t.title}</TabTitle>
            <TabClose><Glyph d={P.close} size={15} color="#3c4043" /></TabClose>
            {!t.plain && <TabDivider />}
          </Tab>
        ))}
        <Tab $active>
          <GmailMark w={15} h={12} />
          <TabTitle>Test - ratipriyakunde</TabTitle>
          <TabClose><Glyph d={P.close} size={15} color="#3c4043" /></TabClose>
        </Tab>
        <NewTab><Glyph d={P.add} size={24} color="#3c4043" /></NewTab>
        <WindowControls>
          <WinBtn $right={4}><Glyph d={P.expand} size={20} color="#45494e" /></WinBtn>
          <WinBtn $w={20}><Glyph d="M6 19h12v2H6z" size={18} color="#5f6368" /></WinBtn>
          <WinBtn><Glyph d="M8 3h13v13h-5v5H3V8h5V3zm2 5h6v6h3V5h-9v3zM5 10v9h9v-9H5z" size={16} color="#5f6368" /></WinBtn>
          <WinBtn><Glyph d={P.close} size={18} color="#5f6368" /></WinBtn>
        </WindowControls>
      </TabStrip>

      <UrlRow>
        <NavBtn><Glyph d={P.back} size={20} color="#5f6368" /></NavBtn>
        <NavBtn><Glyph d={P.forward} size={20} color="#b8babd" /></NavBtn>
        <NavBtn><Glyph d={P.refresh} size={20} color="#5f6368" /></NavBtn>
        <Omnibox>
          <Glyph d={P.lock} size={14} color="#5f6368" />
          <UrlText><b>mail.google.com</b>/mail/u/1/#inbox/FMfcgzGrcXtkxdhFghTtqDnhCWmKkwJK</UrlText>
          <OmniActions>
            <Glyph d={P.share} size={16} color="#5f6368" />
            <Glyph d={P.star} size={19} color="#5f6368" />
          </OmniActions>
        </Omnibox>
        <Extensions>
          <ExtSlot>
            <Glyph d={P.dropper} size={18} color="#8a8d91" />
            <DropperBadge />
          </ExtSlot>
          <ExtSlot><Glyph d={P.puzzle} size={18} color="#5f6368" /></ExtSlot>
          <ExtSlot><Glyph d={P.sidePanel} size={17} color="#5f6368" /></ExtSlot>
          <ExtSlot><PinLogo size={22} /></ExtSlot>
          <UpdatePill>
            Update
            <Glyph d={P.more} size={17} color="#d93025" />
          </UpdatePill>
        </Extensions>
      </UrlRow>

      <BookmarkBar>
        <Bookmark>
          <TerminalLogo w={16} h={16} size={4} border={0} />
          <BookmarkName $wide>Zero Dow...</BookmarkName>
        </Bookmark>
        <Bookmark>
          <SheetsIcon size={16} />
          <BookmarkName>tmpglobal</BookmarkName>
        </Bookmark>
      </BookmarkBar>

      <Mail>
        <TopBar>
          <Brand>
            <Glyph d={P.menu} size={36} color="#5f6368" />
            <Launcher $left={26}><GmailMark /></Launcher>
            <BrandName>Gmail</BrandName>
          </Brand>
          <SearchBox>
            <Glyph d={P.search} size={36} color="#444746" />
            <SearchHint>Search mail</SearchHint>
            <Glyph d={P.tune} size={36} color="#444746" />
          </SearchBox>
          <TopActions>
            <TopAction><Glyph d={P.help} size={36} color="#444746" /></TopAction>
            <TopAction><Glyph d={P.gear} size={36} color="#444746" /></TopAction>
            <TopAction><Glyph d={P.apps} size={36} color="#444746" /></TopAction>
            <UserAvatar><CaduceusLogo /></UserAvatar>
          </TopActions>
        </TopBar>

        <Body>
          <Sidebar>
            <Compose>
              <Glyph d={P.edit} size={36} color="#000" />
              <RowText>Compose</RowText>
            </Compose>
            {folders.map((f) => (
              <NavRow key={f.name} $bold={f.bold} $active={f.active}>
                <Glyph d={f.icon} color={f.active ? '#041e49' : '#444746'} />
                <RowText>{f.name}</RowText>
                {f.count && <NavCount $strong={f.active}>{f.count}</NavCount>}
              </NavRow>
            ))}
            <LabelsHead>
              Labels
              <Glyph d={P.add} size={32} color="#444746" />
            </LabelsHead>
            <NavRow>
              <Glyph d={P.labelFill} />
              <RowText>Friend</RowText>
            </NavRow>
            <NavRow>
              <Glyph d={P.expand} />
              <RowText>More</RowText>
            </NavRow>
          </Sidebar>

          <Panel>
            <MailToolbar>
              <ToolBtn><Glyph d={P.back} /></ToolBtn>
              <ToolBtn $left={18}><Glyph d={P.archive} /></ToolBtn>
              <ToolBtn><Glyph d={P.report} /></ToolBtn>
              <ToolBtn><Glyph d={P.trash} /></ToolBtn>
              <ToolSep />
              <ToolBtn><Glyph d={P.mail} /></ToolBtn>
              <ToolBtn><Glyph d={P.clock} /></ToolBtn>
              <ToolBtn><Glyph d={P.addTask} /></ToolBtn>
              <ToolSep />
              <ToolBtn><Glyph d={P.move} /></ToolBtn>
              <ToolBtn><Glyph d={P.label} /></ToolBtn>
              <ToolBtn $w={54}><Glyph d={P.more} /></ToolBtn>
              <PageCount>1 of 62</PageCount>
              <ToolBtn $w={60}><Glyph d={P.left} size={30} color="#a8abaf" /></ToolBtn>
              <ToolBtn $w={60}><Glyph d={P.right} size={30} /></ToolBtn>
            </MailToolbar>
            <MessageArea>
              <MessageScroll>
                <PeekAvatar />
                <MessageRule />
                <MessageHead>
                  <SenderAvatar><PinLogo size={60} /></SenderAvatar>
                  <SenderInfo>
                    <SenderName>imaluopp@gmail.com</SenderName>
                    <Recipient>
                      to me
                      <Glyph d={P.dropdown} size={24} color="#5e5e5e" />
                    </Recipient>
                  </SenderInfo>
                  <MessageMeta>
                    <MetaTime>12:03 PM (0 minutes ago)</MetaTime>
                    <MetaBtn><Glyph d={P.star} /></MetaBtn>
                    <MetaBtn><ReplyArrow /></MetaBtn>
                    <MetaBtn><Glyph d={P.more} /></MetaBtn>
                  </MessageMeta>
                </MessageHead>
                <MessageBody>
                  <div>Dear Ratipriy,</div>
                  <TrimPill><span /><span /><span /></TrimPill>
                  <Para $top={35}>
                    CPR Suppliers LLC is sending you this invitation and requests you to begin using Enrollware to store and submit your training class records and rosters. There is no charge for this service when used in association with CPR Suppliers LLC. The setup process involves completing a simple one page form and then a few configuration pages to tell us about your course types and locations.
                  </Para>
                  <Para><MailLink href="#">Click here begin the setup process</MailLink></Para>
                  <Para>If you have any questions please contact CPR Suppliers LLC.</Para>
                  <ActionRow>
                    <PillButton><ReplyArrow /><RowText>Reply</RowText></PillButton>
                    <PillButton $forward><ReplyArrow flip /><RowText>Forward</RowText></PillButton>
                  </ActionRow>
                </MessageBody>
              </MessageScroll>
              <ScrollTrack><ScrollThumb /></ScrollTrack>
            </MessageArea>
          </Panel>

          <Rail>
            <RailCell><CalendarIcon /></RailCell>
            <RailCell><KeepIcon /></RailCell>
            <RailCell><TasksIcon /></RailCell>
            <RailCell><ContactsIcon /></RailCell>
            <RailRule />
            <RailCell><AddonIcon /></RailCell>
            <RailCell><Glyph d={P.add} size={34} color="#111" /></RailCell>
            <RailToggle><Glyph d={P.right} size={30} color="#1f1f1f" /></RailToggle>
          </Rail>
        </Body>
      </Mail>
    </Desktop>
  );
}
